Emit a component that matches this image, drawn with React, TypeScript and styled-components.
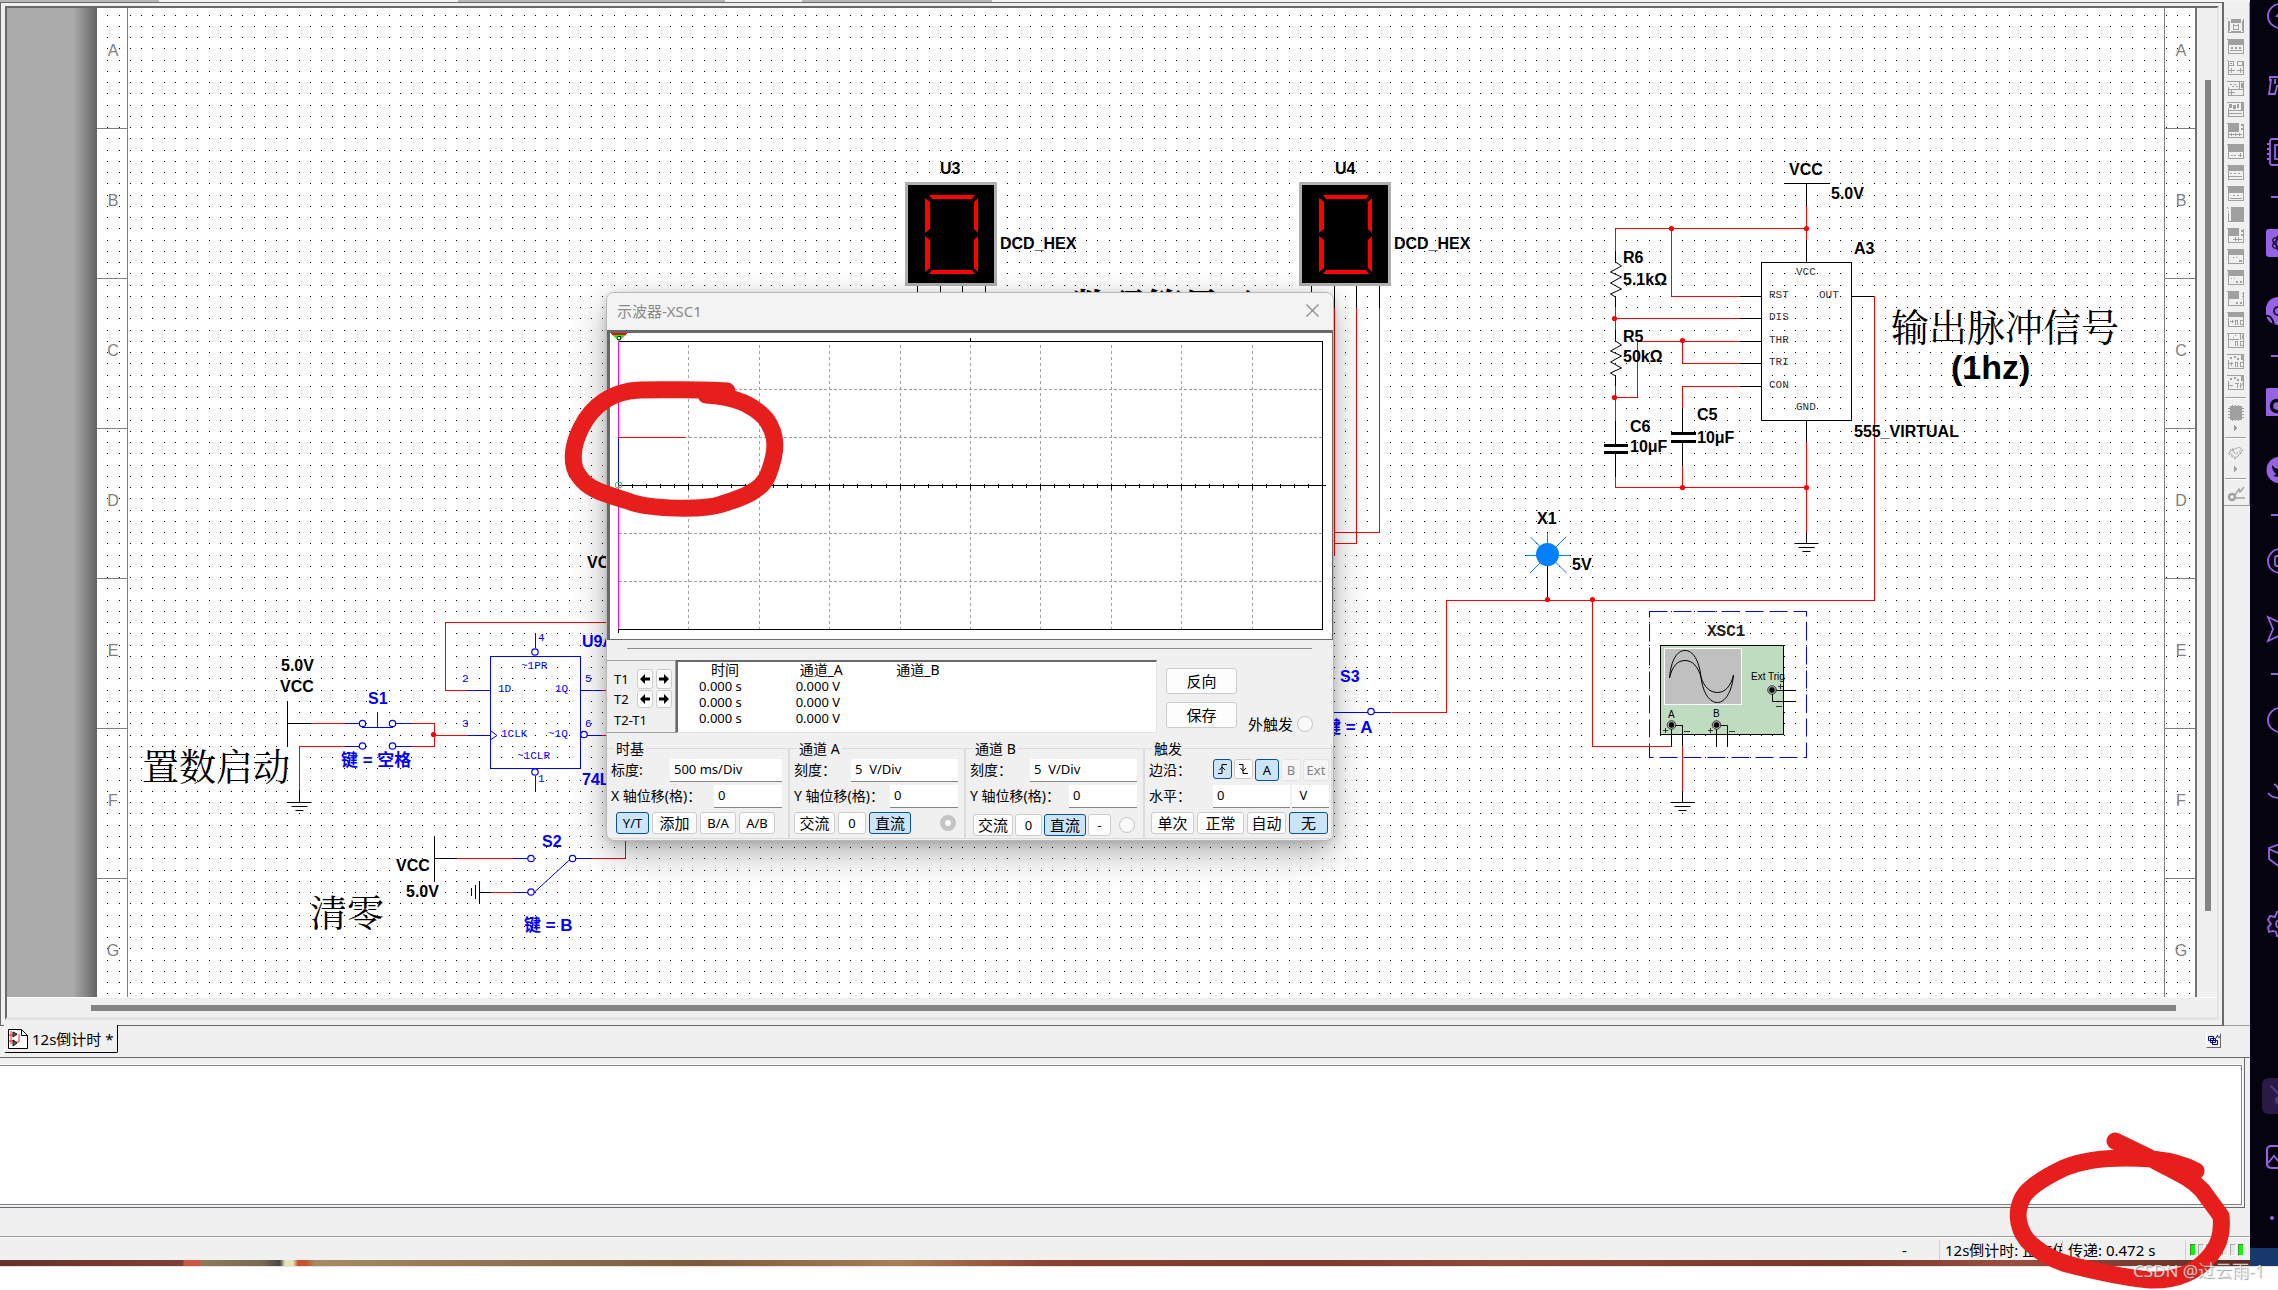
import React from "react";
import styled, { createGlobalStyle, css } from "styled-components";

const UI_FONT = `"Noto Sans", "Noto Sans CJK SC", sans-serif`;
const LABEL_FONT = `"Liberation Sans", "Noto Sans CJK SC", sans-serif`;
const PIN_FONT = `"Liberation Mono", "Noto Sans CJK SC", monospace`;
const RED = "#ff0000";
const BLUE = "#0000ff";
const MARK = "#e61e1c";

const GlobalStyle = createGlobalStyle`
  * { box-sizing: border-box; }
  body { margin: 0; background: #ffffff; overflow: hidden; font-family: ${UI_FONT}; }
  button, input { font: inherit; color: inherit; margin: 0; }
`;

/* ---------- shell ---------- */

const Screen = styled.div`
  position: relative;
  display: flex;
  flex-direction: column;
  height: 100vh;
  overflow: hidden;
`;

const Desktop = styled.div`
  flex: 1;
  min-height: 0;
  display: flex;
`;

const MainWindow = styled.main`
  flex: 1;
  min-width: 0;
  display: flex;
  flex-direction: column;
  background: #f0f0f0;
`;

const Footer = styled.footer`
  height: 24px;
  background: #ffffff;
  border-top: 1px solid #e8e0e0;
`;

const TopEdge = styled.div`
  height: 2px;
  background: linear-gradient(90deg, #b4b8b8 0 159px, #f4f4f4 159px 458px, #b4b8b8 458px 725px, #f4f4f4 725px 802px, #b4b8b8 802px 992px, #f4f4f4 992px);
`;

const WorkRow = styled.div`
  flex: 1;
  min-height: 0;
  display: flex;
`;

const DocFrame = styled.section`
  flex: 1;
  min-width: 0;
  display: flex;
  flex-direction: column;
  border: 1px solid #696969;
  border-right-width: 2px;
  padding: 3px 3px 5px 4px;
  background: #f0f0f0;
`;

const DocInner = styled.div`
  flex: 1;
  min-height: 0;
  display: flex;
  flex-direction: column;
  border-style: solid;
  border-width: 2px 2px 3px 2px;
  border-color: #696969 #e3e3e3 #e3e3e3 #696969;
`;

const SheetRow = styled.div`
  flex: 1;
  min-height: 0;
  display: flex;
`;

const SheetMargin = styled.div`
  width: 90px;
  background: linear-gradient(90deg, #ababab 0 66px, #646464 90px);
`;

const Page = styled.div`
  position: relative;
  flex: 1;
  min-width: 0;
  display: flex;
  justify-content: space-between;
  overflow: hidden;
  background: #ffffff;
  border-right: 2px solid #737373;
`;

const PageLayer = styled.svg`
  position: absolute;
  top: 0;
  left: 0;
`;

const Ruler = styled.div<{ $side: "left" | "right" }>`
  position: relative;
  width: 31px;
  margin-top: -29px;
  border: 0 solid #808080;
  ${(p) => (p.$side === "left" ? "border-right-width: 1px;" : "border-left-width: 1px;")}
`;

const RulerCell = styled.div`
  height: 150px;
  padding: 0 0 5px 2px;
  display: flex;
  align-items: center;
  justify-content: center;
  border-bottom: 1px solid #808080;
  color: #808080;
  font: 16px ${LABEL_FONT};
`;

const VScroll = styled.div`
  width: 20px;
  display: flex;
  justify-content: center;
  padding: 72px 0 86px 2px;
`;

const ScrollThumb = styled.div`
  background: #848484;
  min-width: 6px;
  min-height: 6px;
`;

const HScroll = styled.div`
  height: 20px;
  display: flex;
  align-items: center;
  padding: 0 41px 0 84px;
  border-top: 1px solid #ffffff;
  & > ${ScrollThumb} { flex: 1; }
`;

/* ---------- instrument toolbar ---------- */

const ToolColumn = styled.aside`
  width: 26px;
  border-bottom: 1px solid #a0a0a0;
`;

const Tools = styled.div`
  height: 504px;
  display: flex;
  flex-direction: column;
  align-items: center;
  padding: 13px 2px 0 0;
  border: solid #a0a0a0;
  border-width: 0 1px 1px 0;
`;

const ToolButton = styled.button<{ $h?: number }>`
  height: ${(p) => p.$h ?? 21}px;
  width: 22px;
  padding: 0;
  border: 0;
  background: transparent;
  display: flex;
  align-items: center;
  justify-content: center;
`;

const ToolRule = styled.hr`
  width: 21px;
  margin: 4px 0 3px;
  border: 0;
  border-top: 1px solid #a0a0a0;
  border-bottom: 1px solid #ffffff;
`;

/* ---------- tabs, output, status ---------- */

const TabRow = styled.div`
  height: 32px;
  display: flex;
  justify-content: space-between;
  align-items: flex-start;
  padding: 0 29px 0 4px;
  border-bottom: 1px solid #696969;
`;

const DocTab = styled.button`
  height: 28px;
  margin-top: -1px;
  padding: 0 3px 0 3px;
  display: flex;
  align-items: center;
  gap: 4px;
  position: relative;
  background: #f0f0f0;
  border: solid #000000;
  border-width: 0 1px 1px 0;
  border-left: 1px solid #ffffff;
  border-radius: 0 0 2px 2px;
  font-size: 15px;
  line-height: 20px;
  white-space: nowrap;
`;

const CascadeButton = styled.button`
  width: 15px;
  height: 15px;
  margin-top: 7px;
  padding: 0;
  display: flex;
  background: #f0f0f0;
  border: 1px solid #696969;
  border-top-color: #ffffff;
  border-left-color: #ffffff;
`;

const OutputFrame = styled.div`
  height: 150px;
  margin-right: 5px;
  padding: 6px 2px 2px 0;
  display: flex;
  border: solid #696969;
  border-width: 0 1px 1px 0;
`;

const Output = styled.div`
  flex: 1;
  background: #ffffff;
  border: 1px solid #82828e;
  border-left: 0;
  margin: 1px 0 0;
  box-shadow: 0 -1px 0 #ffffff, 1px 0 0 #ffffff;
`;

const Gap = styled.div`
  height: 28px;
`;

const StatusBar = styled.div`
  height: 24px;
  display: flex;
  justify-content: flex-end;
  border-top: 1px solid #a0a0a0;
  box-shadow: inset 0 1px 0 #ffffff;
  font-size: 15px;
  line-height: 22px;
  white-space: nowrap;
`;

const StatusCell = styled.div<{ $w: number }>`
  width: ${(p) => p.$w}px;
  margin-top: 3px;
  padding-left: 5px;
  overflow: hidden;
  border-right: 1px solid #d0d0d0;
  line-height: 20px;
`;

const Leds = styled.div`
  width: 64px;
  padding: 4px 0 0 4px;
  margin-top: 3px;
  display: flex;
  gap: 2px;
`;

const Led = styled.span<{ $on?: boolean }>`
  width: 6px;
  height: 12px;
  background: ${(p) => (p.$on ? "#00ff00" : "#e6e6e6")};
  border: 1px solid ${(p) => (p.$on ? "#3f8f30" : "#a8a8a8")};
  border-right-color: #ffffff;
  border-bottom-color: #ffffff;
`;

const Wallpaper = styled.div`
  height: 6px;
  background: linear-gradient(90deg, #66312a 0, #7d4236 183px, #cb5747 184px 200px, #8b7b5b 202px, #766c50 262px,
    #47444a 280px, #e6e4b4 285px 293px, #c4532f 298px 306px, #a68b66 315px, #8d7150 520px, #7c5a3c 700px,
    #a88058 900px, #8a4030 1050px, #7d3a2c 1300px, #8f4a38 1500px, #74382b 1850px, #9a5040 2010px, #5c2a20 2250px);
`;

/* ---------- side dock ---------- */

const Dock = styled.nav`
  width: 28px;
  display: flex;
  flex-direction: column;
  justify-content: space-between;
  overflow: hidden;
  background: #05030f;
  border-bottom: 18px solid #17396b;
`;

const DockGroup = styled.div`
  display: flex;
  flex-direction: column;
  align-items: flex-start;
  &:first-child { margin-top: -18px; }
`;

const DockButton = styled.button<{ $h: number; $active?: boolean }>`
  width: 44px;
  height: ${(p) => p.$h}px;
  padding: 0 0 0 12px;
  border: 0;
  background: transparent;
  display: flex;
  align-items: center;
  & > svg { margin-left: 4px; flex: none; }
  ${(p) =>
    p.$active &&
    css`
      & > svg { margin-left: 0; padding: 6px; width: 36px; height: 36px; background: #2d1d4c; border-radius: 6px; opacity: 0.9; }
    `}
`;

const DockRule = styled.hr`
  width: 20px;
  height: 2px;
  margin: 10px 0 11px 21px;
  border: 0;
  background: #9763e6;
`;

/* ---------- oscilloscope window ---------- */

const Scope = styled.section`
  position: absolute;
  left: 606px;
  top: 292px;
  width: 728px;
  display: flex;
  flex-direction: column;
  background: #f0f0f0;
  border: 1px solid #b8b8b8;
  border-radius: 8px;
  box-shadow: 0 12px 34px rgba(0, 0, 0, 0.32), 0 2px 10px rgba(0, 0, 0, 0.14);
  overflow: hidden;
  font-size: 13px;
  line-height: 16px;
  color: #000000;
`;

const ScopeTitle = styled.header`
  height: 37px;
  padding: 0 13px 2px 10px;
  display: flex;
  align-items: center;
  justify-content: space-between;
  background: #f3f3f3;
  color: #8a8a8a;
  font-size: 15px;
`;

const CloseButton = styled.button`
  width: 16px;
  height: 16px;
  padding: 0;
  border: 0;
  background: transparent;
  display: flex;
  align-items: center;
  justify-content: center;
`;

const PlotFrame = styled.div`
  height: 310px;
  background: #ffffff;
  border: solid #696969;
  border-width: 3px 1px 1px 3px;
`;

const ScopeRule = styled.hr`
  margin: 8px 21px 11px 20px;
  border: 0;
  border-top: 1px solid #8a8a8a;
`;

const ReadoutRow = styled.div`
  height: 73px;
  display: flex;
`;

const CursorPanel = styled.div`
  width: 69px;
  padding: 8px 4px 0 7px;
  border: 1px solid #a0a0a0;
  border-left: 0;
  display: grid;
  grid-template-columns: 20px 16px 16px;
  column-gap: 3px;
  grid-template-rows: 20px 20px 22px;
  align-items: center;
`;

const CursorDelta = styled.span`
  grid-column: 1 / -1;
`;

const ReadoutBox = styled.div`
  width: 481px;
  background: #ffffff;
  border: 1px solid #e3e3e3;
  border-top: 2px solid #696969;
  border-left: 2px solid #696969;
`;

const ReadoutTable = styled.table`
  border-collapse: collapse;
  table-layout: fixed;
  width: 290px;
  margin-left: 21px;
  & th, & td { padding: 0; height: 16px; line-height: 16px; font-weight: 400; text-align: left; white-space: pre; }
  & th { font-size: 14px; padding-left: 12px; }
  & th:nth-child(2) { padding-left: 4px; }
  & th:nth-child(3) { padding-left: 4px; }
`;

const ScopeActions = styled.div`
  flex: 1;
  padding: 8px 0 0 9px;
  display: flex;
  gap: 11px;
`;

const ActionStack = styled.div`
  display: flex;
  flex-direction: column;
  gap: 8px;
`;

const ExtLabel = styled.label`
  align-self: flex-end;
  padding-bottom: 1px;
  display: flex;
  align-items: center;
  gap: 4px;
  font-size: 15px;
`;

const Radio = styled.input<{ $on?: boolean }>`
  appearance: none;
  flex: none;
  width: 16px;
  height: 16px;
  border-radius: 50%;
  border: ${(p) => (p.$on ? "5px solid #c4c4c4" : "1px solid #c4c4c4")};
  background: #f9f9f9;
`;

const Btn = styled.button<{ $w: number; $h?: number; $on?: boolean; $off?: boolean }>`
  width: ${(p) => p.$w}px;
  height: ${(p) => p.$h ?? 22}px;
  padding: 0;
  display: flex;
  align-items: center;
  justify-content: center;
  border-radius: 3px;
  border: 1px solid ${(p) => (p.$on ? "#005499" : p.$off ? "#e4e4e4" : "#cccccc")};
  background: ${(p) => (p.$on ? "#cce4f7" : p.$off ? "#f5f5f5" : "#fdfdfd")};
  color: ${(p) => (p.$off ? "#838383" : "#000000")};
  white-space: nowrap;
  flex: none;
`;

const CnBtn = styled(Btn)`
  font-size: 15px;
`;

const Groups = styled.div`
  display: grid;
  grid-template-columns: 183px 176px 179px 1fr;
  padding: 7px 0 1px;
`;

const Group = styled.fieldset`
  min-width: 0;
  margin: 0;
  padding: 0 6px 2px 4px;
  height: 99px;
  border: 1px solid #dcdcdc;
  border-left-width: 0;
  border-right-width: 2px;
  display: flex;
  flex-direction: column;
`;

const Legend = styled.legend`
  margin-left: 3px;
  padding: 0 2px;
  line-height: 17px;
  font-size: 14px;
`;

const Field = styled.div`
  height: 26px;
  display: flex;
  align-items: center;
  justify-content: space-between;
  & > label { font-size: 14px; white-space: nowrap; }
`;

const Box = styled.input<{ $w: number }>`
  width: ${(p) => p.$w}px;
  height: 23px;
  padding: 0 4px 2px;
  border: 0;
  border-bottom: 1px solid #868686;
  border-radius: 0;
  background: #ffffff;
  outline: none;
`;

const BtnRow = styled.div<{ $pad?: number; $gap?: number; $drop?: boolean }>`
  display: flex;
  align-items: center;
  gap: ${(p) => p.$gap ?? 3}px;
  padding-left: ${(p) => p.$pad ?? 0}px;
  margin-top: ${(p) => (p.$drop ? 5 : 3)}px;
  & > input { margin: 0 2px 0 auto; }
`;

const Inline = styled.div`
  display: flex;
  gap: 2px;
  margin-right: -4px;
`;

/* ---------- annotations ---------- */

const Marker = styled.svg`
  position: absolute;
  overflow: visible;
  pointer-events: none;
`;

const PlotMarker = styled(Marker)`
  left: 564px;
  top: 380px;
`;

const CornerMarker = styled(Marker)`
  right: 47px;
  bottom: 0;
`;

const Watermark = styled.span`
  position: absolute;
  right: 0;
  bottom: 7px;
  width: 145px;
  overflow: visible;
  font-size: 17px;
  line-height: 24px;
  color: rgba(255, 255, 255, 0.72);
  text-shadow: 1px 1px 1px rgba(90, 90, 90, 0.6);
  white-space: nowrap;
`;

/* ---------- schematic drawing ---------- */

const Wire = ({ d, c = RED, w = 1 }: { d: string; c?: string; w?: number }) => (
  <path d={d} stroke={c} strokeWidth={w} fill="none" />
);
const Node = ({ x, y }: { x: number; y: number }) => <circle cx={x} cy={y} r={2.6} fill={RED} />;
const Term = ({ x, y }: { x: number; y: number }) => (
  <circle cx={x} cy={y} r={3.2} fill="#fff" stroke={BLUE} strokeWidth={1.2} />
);
const Label = ({ x, y, c = "#000", s = 16, children }: { x: number; y: number; c?: string; s?: number; children: string }) => (
  <text x={x} y={y} fill={c} fontSize={s} fontWeight={700} fontFamily={LABEL_FONT}>{children}</text>
);
const Pin = ({ x, y, c = "#333", children }: { x: number; y: number; c?: string; children: string }) => (
  <text x={x} y={y} fill={c} fontSize={11} fontFamily={PIN_FONT}>{children}</text>
);
const Note = ({ x, y, s = 37, w = 400, children }: { x: number; y: number; s?: number; w?: number; children: string }) => (
  <text x={x} y={y} fontSize={s} fontWeight={w} fontFamily={`"Noto Serif CJK SC", "Noto Sans CJK SC", sans-serif`}>{children}</text>
);
const Ground = ({ x, y }: { x: number; y: number }) => (
  <Wire c="#000" d={`M${x - 12} ${y}h24M${x - 8} ${y + 4}h16M${x - 4} ${y + 8}h8`} />
);
const Resistor = ({ x, y }: { x: number; y: number }) => (
  <Wire c="#000" d={`M${x} ${y - 11}v11l6 4l-11 6l11 5l-11 6l11 6l-11 5l5 3v10`} />
);
const Jack = ({ x, y }: { x: number; y: number }) => (
  <g>
    <circle cx={x} cy={y} r={4.3} fill="#a8a8a8" stroke="#222" strokeWidth={0.8} />
    <circle cx={x} cy={y} r={2.7} fill="#000" />
  </g>
);
const Digit = ({ x }: { x: number }) => (
  <g>
    <rect x={x} y={182} width={92} height={104} fill="#b0b0b0" />
    <rect x={x + 3} y={185} width={86} height={98} fill="#000" />
    <g fill={RED}>
      <path d={`M${x + 24} 195h46l-3 4h-40z`} />
      <path d={`M${x + 27} 270h40l3 4h-46z`} />
      <path d={`M${x + 20} 198l5 4v27l-5 4zM${x + 20} 236l5 4v28l-5 4z`} />
      <path d={`M${x + 73} 198l-4 4v27l4 4zM${x + 73} 236l-4 4v28l4 4z`} />
    </g>
    <Wire c="#000" d={`M${x + 12.5} 286v22M${x + 35.5} 286v22M${x + 57.5} 286v22M${x + 80.5} 286v22`} />
  </g>
);

const Schematic = () => (
  <PageLayer width={2100} height={989} viewBox="97 8 2100 989" role="img" aria-label="12s 倒计时电路">
    <Label x={940} y={174}>U3</Label>
    <Digit x={905} />
    <Label x={1000} y={249}>DCD_HEX</Label>
    <Label x={1335} y={174}>U4</Label>
    <Digit x={1299} />
    <Label x={1394} y={249}>DCD_HEX</Label>
    <Note x={1072} y={321} w={700}>数码管显示</Note>
    <Wire d="M1334.5 308v248M1356.5 308v235.5h-24M1379.5 308v224.5h-47" />

    <Label x={281} y={671}>5.0V</Label>
    <Label x={280} y={692}>VCC</Label>
    <Wire c="#000" d="M287.5 701v46M287 723.5h24" />
    <Wire d="M311 723.5h34M412 723.5h22.5v23h-22.5M434 735.5h34M345 746.5h-45.5v44" />
    <Wire c={BLUE} d="M345 723.5h15M345 746.5h15M396 723.5h16M396 746.5h16M362 727.5h31M377.5 712v15M468 735.5h22" />
    <Term x={362.5} y={723.5} /><Term x={392.5} y={723.5} /><Term x={362.5} y={746} /><Term x={392.5} y={746} />
    <Node x={433.5} y={734.5} />
    <Wire c="#000" d="M299.5 790v12" />
    <Ground x={299.5} y={802.5} />
    <Label x={368} y={704} c={BLUE}>S1</Label>
    <Label x={341} y={766} c={BLUE} s={17}>键 = 空格</Label>
    <Note x={142} y={781}>置数启动</Note>

    <Wire d="M610 622.5h-164.5v68h22M602 690.5h8M602 735.5h8" />
    <Wire c={BLUE} d="M467 690.5h23M490.5 656.5h90v112h-90zM535.5 633v15M535.5 776v15M580 690.5h22M587 735.5h15M491 731l6 4.5l-6 4" />
    <Term x={535} y={652} /><Term x={535} y={772} /><Term x={584} y={734.5} />
    <Pin x={538} y={641} c={BLUE}>4</Pin>
    <Pin x={521} y={669} c={BLUE}>~1PR</Pin>
    <Pin x={498} y={692} c={BLUE}>1D</Pin>
    <Pin x={555} y={692} c={BLUE}>1Q</Pin>
    <Pin x={462} y={682} c={BLUE}>2</Pin>
    <Pin x={585} y={682} c={BLUE}>5</Pin>
    <Pin x={462} y={727} c={BLUE}>3</Pin>
    <Pin x={585} y={727} c={BLUE}>6</Pin>
    <Pin x={501} y={737} c={BLUE}>1CLK</Pin>
    <Pin x={548} y={737} c={BLUE}>~1Q</Pin>
    <Pin x={517} y={759} c={BLUE}>~1CLR</Pin>
    <Pin x={538} y={782} c={BLUE}>1</Pin>
    <Label x={582} y={647} c={BLUE}>U9A</Label>
    <Label x={582} y={785} c={BLUE}>74L</Label>
    <Label x={587} y={568}>VCC</Label>

    <Label x={396} y={871}>VCC</Label>
    <Label x={406} y={897}>5.0V</Label>
    <Wire c="#000" d="M434.5 836v46M434 858.5h23M479.5 881v22M475.5 885v14M471.5 888v8M479 892.5h12" />
    <Wire d="M457 858.5h56M592 858.5h33.5v-20M491 892.5h22" />
    <Wire c={BLUE} d="M513 858.5h15M576 858.5h16M513 892.5h15M534 892.5l36-33" />
    <Term x={531} y={858.5} /><Term x={572.5} y={858.5} /><Term x={531} y={892} />
    <Label x={542} y={847} c={BLUE}>S2</Label>
    <Label x={524} y={931} c={BLUE} s={17}>键 = B</Label>
    <Note x={310} y={927}>清零</Note>

    <Label x={1789} y={175}>VCC</Label>
    <Label x={1831} y={199}>5.0V</Label>
    <Label x={1854} y={254}>A3</Label>
    <Wire c="#000" d="M1784 183.5h46M1806.5 183v23M1806.5 240v22M1761.5 262.5h90v158h-90zM1806.5 420v22M1806.5 533v10M1851 296.5h23M1740 296.5h21M1740 318.5h21M1740 341.5h21M1740 363.5h21M1740 386.5h21" />
    <Ground x={1806.5} y={543.5} />
    <Wire d="M1806.5 206v34M1806.5 228.5h-191v23M1671.5 228.5v68h68.5M1615.5 307v24M1615 318.5h125M1740 341.5h-102.5v56h-22M1682.5 341.5v22h57.5M1740 386.5h-57.5v22M1615.5 386v35M1615.5 477v10.5h191M1682.5 466v21M1806.5 442v91M1874.5 296v304.5h-428v112h-55M1592.5 600v146.5h79" />
    <Resistor x={1615.5} y={262} />
    <Resistor x={1615.5} y={341} />
    <Wire c="#000" d="M1615.5 421v24M1615.5 453v24M1682.5 408v25M1682.5 442v24" />
    <Wire c="#000" w={3} d="M1604 445.5h24M1604 452.5h24M1671 433.5h25M1671 441.5h25" />
    <Node x={1806.5} y={228.5} /><Node x={1671.5} y={228.5} /><Node x={1614.5} y={318.5} /><Node x={1682.5} y={340.5} />
    <Node x={1614.5} y={397.5} /><Node x={1682.5} y={487.5} /><Node x={1806.5} y={487.5} />
    <Label x={1623} y={263}>R6</Label>
    <Label x={1623} y={285}>5.1kΩ</Label>
    <Label x={1623} y={342}>R5</Label>
    <Label x={1623} y={362}>50kΩ</Label>
    <Label x={1630} y={432}>C6</Label>
    <Label x={1630} y={452}>10μF</Label>
    <Label x={1697} y={420}>C5</Label>
    <Label x={1697} y={443}>10μF</Label>
    <Label x={1854} y={437}>555_VIRTUAL</Label>
    <Pin x={1796} y={275}>VCC</Pin>
    <Pin x={1769} y={298}>RST</Pin>
    <Pin x={1819} y={298}>OUT</Pin>
    <Pin x={1769} y={320}>DIS</Pin>
    <Pin x={1769} y={343}>THR</Pin>
    <Pin x={1769} y={365}>TRI</Pin>
    <Pin x={1769} y={388}>CON</Pin>
    <Pin x={1796} y={410}>GND</Pin>
    <Note x={1891} y={341} s={38}>输出脉冲信号</Note>
    <Label x={1951} y={379} s={34}>(1hz)</Label>

    <Label x={1537} y={524}>X1</Label>
    <Label x={1572} y={570}>5V</Label>
    <Wire c="#0080ff" d="M1547.5 533v40M1526 555.5h44M1530.5 537l36 36M1566 537l-36 36" />
    <circle cx={1547.5} cy={554.5} r={11.5} fill="#0080ff" />
    <Wire c="#000" d="M1547.5 566v34" />
    <Node x={1547.5} y={599.5} /><Node x={1592.5} y={599.5} />
    <Wire c={BLUE} d="M1330 712.5h38M1374 712.5h17" />
    <Term x={1371} y={711.5} />
    <Label x={1340} y={682} c={BLUE}>S3</Label>
    <Label x={1324} y={733} c={BLUE} s={17}>键 = A</Label>

    <rect x={1649.5} y={611.5} width={157} height={146} fill="none" stroke={BLUE} strokeDasharray="18 6" />
    <text x={1707} y={636} fontSize={16} fontWeight={700} fontFamily={PIN_FONT} fill="#222">XSC1</text>
    <rect x={1660.5} y={645.5} width={123} height={89} fill="#c0dcc0" stroke="#000" />
    <rect x={1664.5} y={648.5} width={77} height={56} fill="#c0c0c0" stroke="#fff" />
    <Wire c="#000" d="M1669.5 678C1671 660 1677 650.5 1685 650.5S1699 660 1701 677S1710 702.5 1717.5 702.5S1732 692 1733.5 675" />
    <Wire c="#000" d="M1669.5 678C1672 667 1677 660.5 1685 660.5S1698 667 1701 677S1710 692.5 1717.5 692.5S1731 686 1733.5 675" />
    <text x={1751} y={680} fontSize={10} fontFamily={LABEL_FONT}>Ext Trig</text>
    <text x={1668} y={718} fontSize={10} fontFamily={LABEL_FONT}>A</text>
    <text x={1713} y={717} fontSize={10} fontFamily={LABEL_FONT}>B</text>
    <Wire c="#000" d="M1772 690.5h24M1772.5 690v11.5h23.5M1671.5 725v21M1671 725.5h11.5v21M1716.5 725v21.5M1716 725.5h11.5v21M1682.5 791v11" />
    <Wire c="#333" d="M1778 686.5h5M1780.5 684v5M1776 706.5h6M1663 730.5h5M1665.5 728v5M1684 731.5h6M1708 730.5h5M1710.5 728v5M1729 731.5h6" />
    <Wire d="M1682.5 746v45" />
    <Ground x={1682.5} y={802.5} />
    <Jack x={1772} y={690} /><Jack x={1671.5} y={725} /><Jack x={1716.5} y={725} />
  </PageLayer>
);

const DOTS = [0, 11, 22, 33];
const GridDots = () => (
  <PageLayer width="100%" height="100%" aria-hidden="true">
    <defs>
      <pattern id="dots" x={22} y={7} width={45} height={45} patternUnits="userSpaceOnUse">
        {DOTS.map((x) => DOTS.map((y) => <rect key={`${x}-${y}`} x={x} y={y} width={1} height={1} fill="#000" />))}
      </pattern>
    </defs>
    <rect width="100%" height="100%" fill="url(#dots)" />
  </PageLayer>
);

const ROWS = ["A", "B", "C", "D", "E", "F", "G"];
const RowRuler = ({ side }: { side: "left" | "right" }) => (
  <Ruler $side={side}>
    {ROWS.map((r) => <RulerCell key={r}>{r}</RulerCell>)}
  </Ruler>
);

/* ---------- toolbar glyphs ---------- */

const G = "#a0a0a0";
const INSTRUMENTS: [string, string][] = [
  ["万用表", "M3 1h10v4h-10zM0 3h2v10h-2zM14 3h2v10h-2zM5 6h1v6h-1zM10 6h1v6h-1zM6 7h4v1h-4zM6 11h4v1h-4zM3 13h10v2h-10z"],
  ["函数发生器", "M0 0h16v6h-16zM3 8h2v2h-2zM7 8h2v2h-2zM11 8h2v2h-2zM2 11h12v1h-12z"],
  ["功率计", "M0 1h6v1h-6zM0 5h6v1h-6zM0 1h1v5h-1zM5 1h1v5h-1zM9 1h6v1h-6zM9 5h6v1h-6zM9 1h1v5h-1zM14 1h1v5h-1zM2 3h2v1h-2zM1 10h6v1h-6zM9 10h6v1h-6zM3 8h1v5h-1zM12 8h1v5h-1z"],
  ["示波器", "M0 0h16v1h-16zM0 8h16v1h-16zM2 3h2v1h-2zM4 5h2v1h-2zM6 3h2v1h-2zM8 5h2v1h-2zM11 0h1v9h-1zM13 2h2v5h-2zM1 11h6v1h-6zM3 9h1v5h-1z"],
  ["四通道示波器", "M0 0h16v1h-16zM1 2h3v4h-3zM5 3h3v4h-3zM9 2h2v4h-2zM13 1h2v7h-2zM0 8h16v1h-16zM1 11h13v1h-13z"],
  ["波特图仪", "M0 0h11v9h-11zM13 1h2v2h-2zM13 5h2v2h-2zM1 11h13v1h-13zM3 10h1v3h-1zM7 10h1v3h-1zM11 10h1v3h-1z"],
  ["频率计数器", "M0 0h16v8h-16zM3 11h2v1h-2zM6 11h2v1h-2zM10 11h4v1h-4zM12 9h1v4h-1z"],
  ["字发生器", "M0 0h16v6h-16zM2 8h2v1h-2zM6 8h2v1h-2zM10 8h2v1h-2zM1 11h13v1h-13z"],
  ["逻辑转换仪", "M0 0h16v7h-16zM5 9h2v1h-2zM9 9h2v1h-2zM2 12h12v1h-12z"],
  ["逻辑分析仪", "M3 0h13v14h-13zM0 1h1v1h-1zM0 4h1v1h-1zM0 7h1v1h-1zM0 10h1v1h-1z"],
  ["IV 分析仪", "M0 0h11v8h-11zM13 2h2v2h-2zM13 6h2v2h-2zM5 11h9v1h-9zM7 9h1v4h-1zM10 9h1v4h-1z"],
  ["失真分析仪", "M0 0h16v6h-16zM5 8h1v1h-1zM8 8h1v1h-1zM11 11h3v2h-3z"],
  ["频谱分析仪", "M0 0h16v6h-16zM3 8h1v1h-1zM6 8h1v1h-1zM8 11h2v2h-2zM12 11h2v2h-2z"],
  ["网络分析仪", "M0 0h11v8h-11zM14 2h1v1h-1zM14 5h1v1h-1zM8 11h2v2h-2zM12 11h2v2h-2z"],
  ["安捷伦信号发生器", "M0 0h16v5h-16zM2 9h4v1h-4zM4 8h1v3h-1zM7 8h3v1h-3zM7 8h1v5h-1zM9 8h1v5h-1zM12 8h3v1h-3zM12 8h1v5h-1zM12 12h3v1h-3z"],
  ["安捷伦万用表", "M0 0h16v1h-16zM0 0h1v6h-1zM0 6h11v1h-11zM7 2h1v1h-1zM5 4h1v1h-1zM12 0h1v7h-1zM14 2h2v4h-2zM7 8h3v1h-3zM7 8h1v5h-1zM9 8h1v5h-1zM12 8h3v1h-3zM12 8h1v5h-1zM12 12h3v1h-3z"],
  ["安捷伦示波器", "M0 0h16v1h-16zM2 3h2v2h-2zM6 2h2v2h-2zM9 4h2v2h-2zM13 1h2v5h-2zM1 9h4v1h-4zM3 8h1v4h-1zM7 8h3v1h-3zM7 8h1v5h-1zM9 8h1v5h-1zM12 8h3v1h-3zM12 8h1v5h-1zM12 12h3v1h-3z"],
  ["泰克示波器", "M0 0h16v1h-16zM2 3h2v2h-2zM6 2h2v2h-2zM9 4h2v2h-2zM13 1h2v5h-2zM1 10h4v1h-4zM7 8h4v1h-4zM9 8h1v5h-1zM12 8h1v5h-1zM13 10h1v1h-1zM14 8h1v2h-1z"],
];

const Glyph = ({ d, frame = true }: { d: string; frame?: boolean }) => (
  <svg width={18} height={16} viewBox="-1 0 18 16" shapeRendering="crispEdges" aria-hidden="true">
    <path d={d} fill={G} />
    {frame && <path d="M-.5 0v1M.5 6v8M15.5 1v13.5h-16" stroke={G} fill="none" />}
  </svg>
);

const InstrumentBar = () => (
  <ToolColumn>
    <Tools>
      {INSTRUMENTS.map(([name, d]) => (
        <ToolButton key={name} aria-label={name}><Glyph d={d} /></ToolButton>
      ))}
      <ToolRule />
      <ToolButton aria-label="LabVIEW 仪器"><Glyph frame={false} d="M2 1h12v14h-12zM0 3h16v1h-16zM0 6h16v1h-16zM0 9h16v1h-16zM0 12h16v1h-16zM4 0h1v16h-1zM7 0h1v16h-1zM10 0h1v16h-1z" /></ToolButton>
      <ToolButton $h={10} aria-label="更多仪器"><Glyph frame={false} d="M6 5l4 3l-4 3z" /></ToolButton>
      <ToolRule />
      <ToolButton $h={22} aria-label="NI 仪器">
        <svg width={18} height={16} aria-hidden="true"><path d="M1 8l7 6l7-7M3 4l6 5l5-4M6 3v4M12 2l4 3l-7 8l-7-6z" stroke={G} fill="none" strokeDasharray="3 1" /></svg>
      </ToolButton>
      <ToolButton $h={10} aria-label="更多 NI 仪器"><Glyph frame={false} d="M6 5l4 3l-4 3z" /></ToolButton>
      <ToolRule />
      <ToolButton $h={22} aria-label="电流探针">
        <svg width={18} height={16} aria-hidden="true">
          <circle cx={5} cy={11} r={3} stroke={G} strokeWidth={2.4} fill="none" />
          <path d="M8 9l4-6l1 3l4-5M9 12h9" stroke={G} strokeWidth={1.4} fill="none" />
        </svg>
      </ToolButton>
    </Tools>
  </ToolColumn>
);

/* ---------- dock ---------- */

const V = "#9763e6";
const DockSvg = ({ children }: { children: React.ReactNode }) => (
  <svg width={28} height={28} viewBox="0 0 28 28" fill="none" stroke={V} strokeWidth={1.8} aria-hidden="true">{children}</svg>
);

const SideDock = () => (
  <Dock>
    <DockGroup>
      <DockButton $h={68} aria-label="指南针"><DockSvg><circle cx={14} cy={14} r={12} /><path d="M11 14l3-4l3 4z" /></DockSvg></DockButton>
      <DockButton $h={68} aria-label="游戏"><DockSvg><path d="M4 7h20v3h-2l2 14h-6l-2-8h-5l-2 8h-6l2-14h-1zM9 9v5M13 9v5" /></DockSvg></DockButton>
      <DockButton $h={68} aria-label="芯片"><DockSvg><rect x={4} y={1} width={22} height={26} rx={2} /><rect x={9} y={7} width={12} height={14} /><path d="M1 6h3M1 11h3M1 16h3M1 21h3M8 -1v2M12 -1v2" /></DockSvg></DockButton>
      <DockRule />
      <DockButton $h={68} aria-label="ChatGPT"><DockSvg><rect x={0} y={0} width={28} height={28} rx={3} fill={V} stroke="none" /><g stroke="#1d1038" strokeWidth={1.4}><ellipse cx={14} cy={14} rx={4} ry={8} /><ellipse cx={14} cy={14} rx={4} ry={8} transform="rotate(60 14 14)" /><ellipse cx={14} cy={14} rx={4} ry={8} transform="rotate(120 14 14)" /></g></DockSvg></DockButton>
      <DockButton $h={68} aria-label="人物"><DockSvg><path d="M0 12a12 12 0 0 1 12-12h16v28h-16a12 12 0 0 1-12-10z" fill={V} stroke="none" /><circle cx={12} cy={14} r={4} stroke="#1d1038" /><path d="M0 19q6-1 8 9" stroke="#05030f" /></DockSvg></DockButton>
      <DockRule />
      <DockButton $h={68} aria-label="音乐"><DockSvg><rect x={-1} y={0} width={30} height={29} rx={4} fill={V} stroke="none" /><circle cx={11} cy={18} r={5.5} stroke="#05030f" strokeWidth={3.5} /></DockSvg></DockButton>
      <DockButton $h={68} aria-label="Twitter"><DockSvg><circle cx={14} cy={14} r={13.5} fill={V} stroke="none" /><path d="M6 9q4 5 9 4q0-5 5-4v6q-5 8-13 5q3-1 3-2q-4-3-4-9z" fill="#05030f" stroke="none" /></DockSvg></DockButton>
      <DockRule />
      <DockButton $h={68} aria-label="目标"><DockSvg><circle cx={14} cy={14} r={12} /><rect x={9} y={9} width={10} height={10} rx={2} /></DockSvg></DockButton>
      <DockButton $h={68} aria-label="发送"><DockSvg><path d="M2 2l25 12l-25 12l5-12z" /></DockSvg></DockButton>
      <DockRule />
      <DockButton $h={68} aria-label="圆环"><DockSvg><circle cx={14} cy={14} r={12} /></DockSvg></DockButton>
      <DockButton $h={68} aria-label="下载"><DockSvg><path d="M2 19q4 5 12 5q8 0 12-5M8 10q4 2 5 7" /></DockSvg></DockButton>
      <DockButton $h={68} aria-label="立方体"><DockSvg><path d="M3 6l11-4l11 4v14l-11 5l-11-8zM3 7l11 5l11-5M14 12v13" /></DockSvg></DockButton>
      <DockButton $h={68} aria-label="设置"><DockSvg><path d="M11 2h6l1 4l3 1l4-1l2 5l-3 3l3 4l-3 5l-4-2l-3 2l-1 3h-5l-1-4l-3-1l-4 1l-1-5l3-3l-3-4l2-4l5 1z" /><circle cx={14} cy={14} r={4} /></DockSvg></DockButton>
    </DockGroup>
    <DockGroup>
      <DockButton $h={60} $active aria-label="工具"><DockSvg><path d="M3 2l14 14" stroke="#5b3d92" strokeWidth={2.5} /><circle cx={13} cy={19} r={5} fill="#5b3d92" stroke="none" /></DockSvg></DockButton>
      <DockButton $h={62} aria-label="图片"><DockSvg><rect x={1} y={3} width={26} height={22} rx={4} strokeWidth={2.2} /><path d="M2 20l6-7l5 6l5-4l8 7M12 10h3" /></DockSvg></DockButton>
      <DockButton $h={60} aria-label="更多"><DockSvg><circle cx={6} cy={14} r={2} fill={V} stroke="none" /><circle cx={14} cy={14} r={2} fill={V} stroke="none" /></DockSvg></DockButton>
    </DockGroup>
  </Dock>
);

/* ---------- oscilloscope ---------- */

const COLS = [1, 2, 3, 4, 5, 6, 7, 8, 9];
const Plot = () => (
  <svg width={722} height={306} viewBox="610 333 722 306" shapeRendering="crispEdges" role="img" aria-label="波形">
    <g stroke="#a0a0a0" fill="none">
      {COLS.map((i) => <path key={i} d={`M${Math.round(618 + i * 70.4)}.5 345V629`} strokeDasharray="3 3" />)}
      {[389.5, 437.5, 533.5, 581.5].map((y) => <path key={y} d={`M619 ${y}H1322`} strokeDasharray="3 2" />)}
    </g>
    <path d="M618 341.5H1322.5V629.5H618.5v3M970.5 338v3M618 485.5H1326" stroke="#000" fill="none" />
    {Array.from({ length: 50 }, (_, i) => (
      <path key={i} d={`M${Math.round(618 + (i + 1) * 14.08)}.5 484v${(i + 1) % 5 ? 4 : 6}`} stroke="#000" />
    ))}
    <path d="M618.5 341V629" stroke="#ff00ff" />
    <path d="M618.5 438v47" stroke={BLUE} />
    <path d="M618 437.5h67" stroke={RED} />
    <ellipse cx={618.5} cy={485} rx={3} ry={3} fill="none" stroke="#00ff00" />
    <path d="M610 333h17l-8 8z" fill="#00ff00" />
    <path d="M610 333h17l-2 2h-13z" fill={RED} />
    <path d="M617 336h3v3h-3z" fill="#fff" stroke="#333" />
  </svg>
);

const Arrow = ({ flip }: { flip?: boolean }) => (
  <svg width={10} height={10} viewBox="0 0 10 10" aria-hidden="true">
    <path d={flip ? "M10 5l-5-5v3.5h-5v3h5v3.5z" : "M0 5l5-5v3.5h5v3h-5v3.5z"} fill="#000" />
  </svg>
);

const Scaled = ({ id, label, value, w }: { id: string; label: string; value: string; w: number }) => (
  <Field>
    <label htmlFor={id}>{label}</label>
    <Box id={id} $w={w} defaultValue={value} />
  </Field>
);

const Oscilloscope = () => (
  <Scope>
    <ScopeTitle>
      示波器-XSC1
      <CloseButton aria-label="关闭">
        <svg width={13} height={13} viewBox="0 0 13 13"><path d="M.5.5l12 12M12.5.5l-12 12" stroke="#8a8a8a" strokeWidth={1.2} /></svg>
      </CloseButton>
    </ScopeTitle>
    <PlotFrame><Plot /></PlotFrame>
    <ScopeRule />
    <ReadoutRow>
      <CursorPanel>
        <span>T1</span><Btn $w={16} $h={20} aria-label="T1 左移"><Arrow /></Btn><Btn $w={16} $h={20} aria-label="T1 右移"><Arrow flip /></Btn>
        <span>T2</span><Btn $w={16} $h={18} aria-label="T2 左移"><Arrow /></Btn><Btn $w={16} $h={18} aria-label="T2 右移"><Arrow flip /></Btn>
        <CursorDelta>T2-T1</CursorDelta>
      </CursorPanel>
      <ReadoutBox>
        <ReadoutTable>
          <thead><tr><th>时间</th><th>通道_A</th><th>通道_B</th></tr></thead>
          <tbody>
            {["T1", "T2", "T2-T1"].map((k) => (
              <tr key={k}><td>0.000 s</td><td>0.000 V</td><td /></tr>
            ))}
          </tbody>
        </ReadoutTable>
      </ReadoutBox>
      <ScopeActions>
        <ActionStack>
          <CnBtn $w={71} $h={26}>反向</CnBtn>
          <CnBtn $w={71} $h={26}>保存</CnBtn>
        </ActionStack>
        <ExtLabel>外触发<Radio type="radio" name="ext" /></ExtLabel>
      </ScopeActions>
    </ReadoutRow>
    <Groups>
      <Group>
        <Legend>时基</Legend>
        <Scaled id="tb-scale" label="标度:" value="500 ms/Div" w={112} />
        <Scaled id="tb-pos" label="X 轴位移(格)：" value="0" w={68} />
        <BtnRow $pad={5}>
          <Btn $w={33} $on>Y/T</Btn><CnBtn $w={45}>添加</CnBtn><Btn $w={36}>B/A</Btn><Btn $w={36}>A/B</Btn>
        </BtnRow>
      </Group>
      <Group>
        <Legend>通道 A</Legend>
        <Scaled id="a-scale" label="刻度：" value="5  V/Div" w={107} />
        <Scaled id="a-pos" label="Y 轴位移(格)：" value="0" w={68} />
        <BtnRow>
          <CnBtn $w={41}>交流</CnBtn><Btn $w={28}>0</Btn><CnBtn $w={42} $on>直流</CnBtn>
          <Radio type="radio" name="cha" $on aria-label="通道 A 探针" />
        </BtnRow>
      </Group>
      <Group>
        <Legend>通道 B</Legend>
        <Scaled id="b-scale" label="刻度：" value="5  V/Div" w={107} />
        <Scaled id="b-pos" label="Y 轴位移(格)：" value="0" w={68} />
        <BtnRow $pad={3} $gap={2} $drop>
          <CnBtn $w={40}>交流</CnBtn><Btn $w={27}>0</Btn><CnBtn $w={42} $on>直流</CnBtn><Btn $w={23}>-</Btn>
          <Radio type="radio" name="chb" aria-label="通道 B 探针" />
        </BtnRow>
      </Group>
      <Group>
        <Legend>触发</Legend>
        <Field>
          <label>边沿：</label>
          <Inline>
            <Btn $w={19} $h={20} $on aria-label="上升沿"><svg width={11} height={12}><path d="M1 10.5h4v-9h5M2.5 7l2.5-3l3 3" stroke="#000" fill="none" /></svg></Btn>
            <Btn $w={19} $h={20} aria-label="下降沿"><svg width={11} height={12}><path d="M1 1.5h4v9h5M2.5 5l2.5 3l3-3" stroke="#000" fill="none" /></svg></Btn>
            <Btn $w={24} $on>A</Btn><Btn $w={20} $off disabled>B</Btn><Btn $w={26} $off disabled>Ext</Btn>
          </Inline>
        </Field>
        <Field>
          <label htmlFor="level">水平：</label>
          <Inline><Box id="level" $w={77} defaultValue="0" /><Box aria-label="电平单位" $w={37} defaultValue=" V" /></Inline>
        </Field>
        <BtnRow $pad={2}>
          <CnBtn $w={43}>单次</CnBtn><CnBtn $w={47}>正常</CnBtn><CnBtn $w={39}>自动</CnBtn><CnBtn $w={39} $on>无</CnBtn>
        </BtnRow>
      </Group>
    </Groups>
  </Scope>
);

export default function App() {
  return (
    <>
      <GlobalStyle />
      <Screen>
        <Desktop>
          <MainWindow>
            <TopEdge />
            <WorkRow>
              <DocFrame>
                <DocInner>
                  <SheetRow>
                    <SheetMargin />
                    <Page>
                      <GridDots />
                      <RowRuler side="left" />
                      <Schematic />
                      <RowRuler side="right" />
                    </Page>
                    <VScroll><ScrollThumb /></VScroll>
                  </SheetRow>
                  <HScroll><ScrollThumb /></HScroll>
                </DocInner>
              </DocFrame>
              <InstrumentBar />
            </WorkRow>
            <TabRow>
              <DocTab>
                <svg width={20} height={20} viewBox="0 0 20 20" aria-hidden="true">
                  <path d="M.5.5h13l6 6v13h-19z" fill="#fff" stroke="#000" />
                  <path d="M13.5.5v6h6" fill="none" stroke="#000" />
                  <path d="M3 2v13M1 6h8M1 12h6M11 5v8h-4" stroke="#ff2030" fill="none" />
                  <path d="M5 3l4 2l-4 3zM5 11l4 3l-4 3z" fill="#666" stroke="#111" />
                </svg>
                12s倒计时 *
              </DocTab>
              <CascadeButton aria-label="还原窗口">
                <svg width={13} height={13} viewBox="0 0 13 13" aria-hidden="true">
                  <path d="M1.5 2.5h5v4h-5zM3.5 4.5h5v4h-5zM5.5 6.5h5v4h-5z" fill="#f0f0f0" stroke="#000090" />
                  <path d="M9 4l2-3M12 2v2" stroke="#000090" />
                </svg>
              </CascadeButton>
            </TabRow>
            <OutputFrame><Output /></OutputFrame>
            <Gap />
            <StatusBar>
              <StatusCell $w={43}>-</StatusCell>
              <StatusCell $w={123}>12s倒计时: 正在仿</StatusCell>
              <StatusCell $w={123}>传递: 0.472 s</StatusCell>
              <Leds><Led $on /><Led /><Led /><Led /><Led /><Led /><Led $on /></Leds>
            </StatusBar>
            <Wallpaper />
          </MainWindow>
          <SideDock />
        </Desktop>
        <Footer />
        <Oscilloscope />
        <PlotMarker width={220} height={136} viewBox="564 380 220 136">
          <path
            d="M727 391C700 389 670 390 640 390C612 391 592 406 581 428C571 448 571 466 579 476C588 490 606 494 628 501C650 510 705 510 722 504C745 497 762 490 768 475C777 452 778 436 766 419C752 403 730 396 706 395"
            fill="none" stroke={MARK} strokeWidth={17} strokeLinecap="round" strokeLinejoin="round"
          />
        </PlotMarker>
        <CornerMarker width={222} height={158} viewBox="2009 1132 222 158">
          <path
            d="M2115 1141L2150 1158C2175 1172 2190 1177 2202 1190L2221 1216C2223 1235 2218 1247 2208 1258C2198 1270 2178 1281 2150 1280C2120 1277 2090 1270 2067 1264C2050 1259 2035 1249 2027 1240C2015 1224 2017 1208 2023 1197C2029 1187 2045 1177 2064 1168C2090 1157 2125 1157 2152 1159Q2180 1162 2196 1171"
            fill="none" stroke={MARK} strokeWidth={17} strokeLinecap="round" strokeLinejoin="round"
          />
        </CornerMarker>
        <Watermark>CSDN @过云雨-1</Watermark>
      </Screen>
    </>
  );
}
